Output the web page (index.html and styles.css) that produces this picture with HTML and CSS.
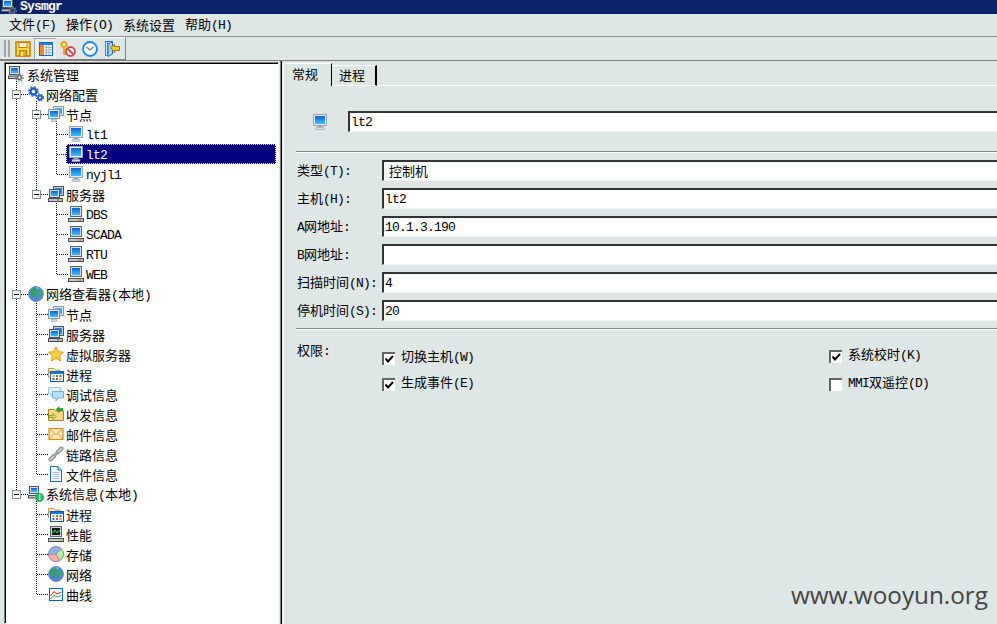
FILE: index.html
```html
<!DOCTYPE html>
<html lang="zh-CN">
<head>
<meta charset="utf-8">
<title>Sysmgr</title>
<link rel="stylesheet" href="styles.css">
</head>
<body>
<svg class="defs" width="0" height="0" aria-hidden="true">
  <defs>
    <linearGradient id="scr" x1="0" y1="0" x2="0" y2="1"><stop offset="0" stop-color="#0a62d8"/><stop offset="1" stop-color="#38c0ff"/></linearGradient>
    <symbol id="mon" viewBox="0 0 16 16">
      <rect x="1.5" y="0.5" width="13" height="11" fill="#e6ebf0" stroke="#98a2ac"/>
      <rect x="3" y="2" width="10" height="8" fill="url(#scr)"/>
      <rect x="5.5" y="12" width="5" height="1.5" fill="#9aa2aa"/>
      <rect x="4" y="13.5" width="8" height="2" fill="#d8dce0" stroke="#9aa2aa" stroke-width=".6"/>
    </symbol>
    <symbol id="srv" viewBox="0 0 16 16">
      <rect x="2.5" y="0.5" width="11" height="10" fill="#d8dde4" stroke="#5a6470"/>
      <rect x="4" y="2" width="8" height="7" fill="url(#scr)"/>
      <rect x="0.5" y="12.5" width="15" height="3" fill="#c4c8cc" stroke="#444c55"/>
      <rect x="8" y="13.5" width="2" height="1" fill="#f0b000"/>
      <rect x="11" y="13.5" width="2" height="1" fill="#e04020"/>
    </symbol>
    <symbol id="mons" viewBox="0 0 16 16">
      <rect x="5.5" y="0.5" width="10" height="9" fill="#dfe7f0" stroke="#8a96a4"/>
      <rect x="7" y="2" width="7" height="6" fill="#4aa8f0"/>
      <rect x="0.5" y="3.5" width="11" height="9" fill="#e6ebf0" stroke="#8a96a4"/>
      <rect x="2" y="5" width="8" height="6" fill="url(#scr)"/>
      <rect x="3.5" y="13.5" width="5" height="2" fill="#d8dce0" stroke="#9aa2aa" stroke-width=".6"/>
    </symbol>
    <symbol id="srvs" viewBox="0 0 16 16">
      <rect x="5.5" y="0.5" width="10" height="9" fill="#c8d2de" stroke="#4a5460"/>
      <rect x="7" y="2" width="7" height="6" fill="#2a88e0"/>
      <rect x="1.5" y="3.5" width="10" height="8" fill="#d8dde4" stroke="#4a5460"/>
      <rect x="3" y="5" width="7" height="5" fill="url(#scr)"/>
      <rect x="0.5" y="12.5" width="14" height="3" fill="#c4c8cc" stroke="#444c55"/>
      <rect x="9" y="13.5" width="2" height="1" fill="#e04020"/>
      <rect x="12" y="13.5" width="2" height="1" fill="#f0b000"/>
    </symbol>
    <symbol id="gears" viewBox="0 0 16 16">
      <circle cx="5.5" cy="5.5" r="3" fill="none" stroke="#1e5ec0" stroke-width="2.4"/>
      <circle cx="5.5" cy="5.5" r="4.6" fill="none" stroke="#2a70d8" stroke-width="1.6" stroke-dasharray="2 1.6"/>
      <circle cx="12" cy="11.5" r="2" fill="none" stroke="#1e5ec0" stroke-width="1.8"/>
      <circle cx="12" cy="11.5" r="3.4" fill="none" stroke="#2a70d8" stroke-width="1.4" stroke-dasharray="1.6 1.2"/>
    </symbol>
    <symbol id="globe" viewBox="0 0 16 16">
      <circle cx="8" cy="8" r="7.5" fill="#4a86de" stroke="#8090c8"/>
      <path d="M3 4 L7 2 L9 4 L7 7 L8 10 L6 12 L4 9 L2 7Z" fill="#2ea84a"/>
      <path d="M10 5 L14 5 L14 9 L11 12 L10 9Z" fill="#39b050"/>
      <path d="M8 1 L11 2 L9 3Z" fill="#a8d8f8"/>
    </symbol>
    <symbol id="star" viewBox="0 0 16 16">
      <polygon points="8,0.8 10.2,5.6 15.5,6.2 11.6,9.8 12.7,15 8,12.4 3.3,15 4.4,9.8 0.5,6.2 5.8,5.6" fill="#ffcf40" stroke="#e89a20"/>
    </symbol>
    <symbol id="proc" viewBox="0 0 16 16">
      <path d="M0.5 12V2.5H6L7.5 4H12V6H0.5" fill="#fbe8b0" stroke="#c89a40"/>
      <rect x="2.5" y="5.5" width="13" height="10" fill="#fff" stroke="#0858c0"/>
      <rect x="3" y="6" width="12" height="2" fill="#1878e0"/>
      <rect x="4.5" y="9" width="2" height="2" fill="#f09020"/>
      <rect x="8" y="9" width="2" height="2" fill="#40b040"/>
      <rect x="11.5" y="9" width="2" height="2" fill="#2070e0"/>
      <rect x="4.5" y="12" width="2" height="2" fill="#2070e0"/>
      <rect x="8" y="12" width="2" height="2" fill="#e04040"/>
      <rect x="11.5" y="12" width="2" height="2" fill="#f09020"/>
    </symbol>
    <symbol id="chat" viewBox="0 0 16 16">
      <path d="M0.5 1.5H12.5V8H5L3 10V8H0.5Z" fill="#e4f2fc" stroke="#9cc8e8"/>
      <path d="M4.5 5.5H15.5V12H10L8 15V12H4.5Z" fill="#b8e0f8" stroke="#70b0e0"/>
    </symbol>
    <symbol id="mailf" viewBox="0 0 16 16">
      <path d="M0.5 14.5V3.5H6L7.5 5H15.5V14.5Z" fill="#fbd880" stroke="#a88020"/>
      <path d="M8 3.5L11 0.5V2.5H15V4.5H11V6.5Z" fill="#20b030" stroke="#107020" stroke-width=".5"/>
      <path d="M1 9.5H5V7.5L8 10.5L5 13.5V11.5H1Z" fill="#f0e020" stroke="#107020" stroke-width=".5"/>
    </symbol>
    <symbol id="mail" viewBox="0 0 16 16">
      <rect x="1" y="2.5" width="14" height="11" fill="#fdeab0" stroke="#d08a18" stroke-width="1.2"/>
      <path d="M1.5 3L8 8.5L14.5 3M1.5 13L6 7.5M14.5 13L10 7.5" fill="none" stroke="#dca040"/>
    </symbol>
    <symbol id="link" viewBox="0 0 16 16">
      <path d="M2.5 13.5L6.5 9.5" stroke="#7e8488" stroke-width="4" stroke-linecap="round"/>
      <path d="M2.5 13.5L6.5 9.5" stroke="#cfd2d4" stroke-width="2" stroke-linecap="round"/>
      <path d="M9.5 6.5L13.5 2.5" stroke="#7e8488" stroke-width="4" stroke-linecap="round"/>
      <path d="M9.5 6.5L13.5 2.5" stroke="#cfd2d4" stroke-width="2" stroke-linecap="round"/>
      <path d="M6 10L10 6" stroke="#9ea2a6" stroke-width="2"/>
    </symbol>
    <symbol id="doc" viewBox="0 0 16 16">
      <path d="M2.5 0.5H10L13.5 4V15.5H2.5Z" fill="#fff" stroke="#1068d0"/>
      <path d="M10 0.5V4H13.5" fill="#cfe4fa" stroke="#1068d0"/>
      <path d="M4.5 6.5H11.5M4.5 8.5H11.5M4.5 10.5H11.5M4.5 12.5H11.5" stroke="#9cbce0"/>
    </symbol>
    <symbol id="sys" viewBox="0 0 16 16">
      <rect x="1.5" y="0.5" width="9" height="7" fill="#d8dde4" stroke="#4a5460"/>
      <rect x="3" y="2" width="6" height="4" fill="url(#scr)"/>
      <rect x="0.5" y="9.5" width="10" height="2.5" fill="#c4c8cc" stroke="#444c55"/>
      <circle cx="11.5" cy="11.5" r="4.5" fill="#28b868"/>
      <rect x="11" y="8.5" width="1.4" height="1.4" fill="#fff"/>
      <rect x="11" y="10.5" width="1.4" height="3.6" fill="#fff"/>
    </symbol>
    <symbol id="perf" viewBox="0 0 16 16">
      <rect x="2.5" y="0.5" width="11" height="10" fill="#d0d4d8" stroke="#5a6470"/>
      <rect x="4" y="2" width="8" height="7" fill="#101810"/>
      <path d="M4 6H6L7 4L9 7L10 5H12" fill="none" stroke="#20e040"/>
      <rect x="0.5" y="12.5" width="15" height="3" fill="#c4c8cc" stroke="#444c55"/>
      <rect x="10" y="13.5" width="3" height="1" fill="#f0b000"/>
    </symbol>
    <symbol id="pie" viewBox="0 0 16 16">
      <circle cx="8" cy="8" r="7.5" fill="#8cb0f0" stroke="#7a84b8"/>
      <path d="M8 8L13.5 3A7.5 7.5 0 0 1 11.5 14.6Z" fill="#b8f0a0" stroke="#70a070" stroke-width=".6"/>
      <path d="M8 8L11.5 14.6A7.5 7.5 0 0 1 0.6 9Z" fill="#f8b0a8" stroke="#c07070" stroke-width=".6"/>
    </symbol>
    <symbol id="chart" viewBox="0 0 16 16">
      <rect x="1.5" y="2.5" width="13" height="12" fill="#fff" stroke="#0860d8"/>
      <path d="M2.5 10L6 5.5L9 8L13.5 6" fill="none" stroke="#e82020"/>
      <path d="M2.5 13L6 9L9 11L13.5 9.5" fill="none" stroke="#28b030"/>
    </symbol>
    <symbol id="mgr" viewBox="0 0 16 16">
      <rect x="1.5" y="0.5" width="10" height="8" fill="#d8dde4" stroke="#4a5460"/>
      <rect x="3" y="2" width="7" height="5" fill="url(#scr)"/>
      <rect x="0.5" y="10" width="9" height="2.5" fill="#c4c8cc" stroke="#444c55"/>
      <circle cx="11.5" cy="11.5" r="2" fill="none" stroke="#60686e" stroke-width="1.6"/>
      <circle cx="11.5" cy="11.5" r="3.7" fill="none" stroke="#80888e" stroke-width="1.4" stroke-dasharray="1.6 1.2"/>
    </symbol>
    <symbol id="save" viewBox="0 0 16 16">
      <rect x="1" y="1" width="14" height="14" fill="#ffdc50" stroke="#d08000" stroke-width="1.6"/>
      <rect x="4" y="1.5" width="8" height="5" fill="#fff8d0" stroke="#d08000"/>
      <rect x="4.5" y="9.5" width="7" height="5.5" fill="#f0a818" stroke="#d08000"/>
      <rect x="6" y="11" width="2" height="4" fill="#fff0b0"/>
    </symbol>
    <symbol id="table" viewBox="0 0 16 16">
      <rect x="1.5" y="1.5" width="13" height="13" fill="#fff" stroke="#0868d8"/>
      <rect x="2" y="2" width="12" height="2" fill="#1888f0"/>
      <rect x="2" y="4" width="4" height="10" fill="#f08820"/>
      <path d="M7 6.5H14M7 9H14M7 11.5H14M8.5 4V14M11 4V14" stroke="#a8b0b8"/>
    </symbol>
    <symbol id="keyno" viewBox="0 0 16 16">
      <circle cx="4" cy="3.5" r="2.5" fill="none" stroke="#e8b000" stroke-width="2"/>
      <path d="M4 6V14M4 10H7M4 13H6.5" stroke="#e8b000" stroke-width="2"/>
      <circle cx="10.5" cy="10.5" r="4.5" fill="#dff" stroke="#d84848" stroke-width="1.8"/>
      <path d="M7.5 7.5L13.5 13.5" stroke="#d84848" stroke-width="1.8"/>
    </symbol>
    <symbol id="clock" viewBox="0 0 16 16">
      <circle cx="8" cy="8" r="7" fill="#f4f4f4" stroke="#1888e8" stroke-width="1.8"/>
      <path d="M4.5 6L8 9L11.5 6" fill="none" stroke="#808890" stroke-width="1.4"/>
    </symbol>
    <symbol id="door" viewBox="0 0 16 16">
      <path d="M1.5 0.5H8.5V13L4 15.5V3L8.5 1" fill="#a8d4f8" stroke="#1870d0"/>
      <rect x="1.5" y="0.5" width="2" height="14" fill="#d8ecfc" stroke="#1870d0" stroke-width=".8"/>
      <path d="M6.5 5.5L10.5 2.5V4.5H15.5V8.5H10.5V10.5Z" transform="translate(0,1)" fill="#ffc830" stroke="#a87000"/>
    </symbol>
    <symbol id="check" viewBox="0 0 9 9">
      <path d="M0.5 3.5L3 6.5L8 1" fill="none" stroke="#000" stroke-width="2"/>
    </symbol>
  </defs>
</svg>

<div class="app">
  <header class="titlebar">
    <svg class="title-icon"><use href="#mgr"/></svg>
    <span class="title-text">Sysmgr</span>
  </header>

  <nav class="menubar">
    <span class="menu-item">文件<span class="m">(F)</span></span>
    <span class="menu-item">操作<span class="m">(O)</span></span>
    <span class="menu-item">系统设置</span>
    <span class="menu-item">帮助<span class="m">(H)</span></span>
  </nav>

  <div class="toolbar-band">
    <div class="toolbar">
      <span class="grip"></span>
      <span class="tool tool-save"><svg class="tool-icon"><use href="#save"/></svg></span>
      <span class="tool tool-on"><svg class="tool-icon"><use href="#table"/></svg></span>
      <span class="tool"><svg class="tool-icon"><use href="#keyno"/></svg></span>
      <span class="tool"><svg class="tool-icon"><use href="#clock"/></svg></span>
      <span class="tool"><svg class="tool-icon"><use href="#door"/></svg></span>
    </div>
  </div>

  <main class="main">
    <aside class="tree-frame">
      <div class="tree">
        <svg class="tree-lines" viewBox="6 65 271 559" aria-hidden="true">
          <g class="dots">
            <path d="M16.5 82V495.5M16.5 95.5H28M16.5 295.5H28M16.5 495.5H28"/>
            <path d="M36.5 102V195.5M36.5 115.5H48M36.5 195.5H48"/>
            <path d="M56.5 122V175.5M56.5 135.5H68M56.5 155.5H66M56.5 175.5H68"/>
            <path d="M56.5 202V275.5M56.5 215.5H68M56.5 235.5H68M56.5 255.5H68M56.5 275.5H68"/>
            <path d="M36.5 302V475.5M36.5 315.5H48M36.5 335.5H48M36.5 355.5H48M36.5 375.5H48M36.5 395.5H48M36.5 415.5H48M36.5 435.5H48M36.5 455.5H48M36.5 475.5H48"/>
            <path d="M36.5 502V595.5M36.5 515.5H48M36.5 535.5H48M36.5 555.5H48M36.5 575.5H48M36.5 595.5H48"/>
          </g>
          <g class="boxes">
            <path d="M12.5 91.5h8v8h-8zM32.5 111.5h8v8h-8zM32.5 191.5h8v8h-8zM12.5 291.5h8v8h-8zM12.5 491.5h8v8h-8z"/>
          </g>
          <g class="minus">
            <path d="M14 95.5h5M34 115.5h5M34 195.5h5M14 295.5h5M14 495.5h5"/>
          </g>
        </svg>
        <ul class="tree-list">
          <li class="row l0"><svg class="ico"><use href="#mgr"/></svg><span class="lbl">系统管理</span></li>
          <li class="row l1"><svg class="ico"><use href="#gears"/></svg><span class="lbl">网络配置</span></li>
          <li class="row l2"><svg class="ico"><use href="#mons"/></svg><span class="lbl">节点</span></li>
          <li class="row l3"><svg class="ico"><use href="#mon"/></svg><span class="lbl m">lt1</span></li>
          <li class="row l3 sel"><svg class="ico"><use href="#mon"/></svg><span class="lbl m">lt2</span></li>
          <li class="row l3"><svg class="ico"><use href="#mon"/></svg><span class="lbl m">nyjl1</span></li>
          <li class="row l2"><svg class="ico"><use href="#srvs"/></svg><span class="lbl">服务器</span></li>
          <li class="row l3"><svg class="ico"><use href="#srv"/></svg><span class="lbl m">DBS</span></li>
          <li class="row l3"><svg class="ico"><use href="#srv"/></svg><span class="lbl m">SCADA</span></li>
          <li class="row l3"><svg class="ico"><use href="#srv"/></svg><span class="lbl m">RTU</span></li>
          <li class="row l3"><svg class="ico"><use href="#srv"/></svg><span class="lbl m">WEB</span></li>
          <li class="row l1"><svg class="ico"><use href="#globe"/></svg><span class="lbl">网络查看器<span class="m">(</span>本地<span class="m">)</span></span></li>
          <li class="row l2"><svg class="ico"><use href="#mons"/></svg><span class="lbl">节点</span></li>
          <li class="row l2"><svg class="ico"><use href="#srvs"/></svg><span class="lbl">服务器</span></li>
          <li class="row l2"><svg class="ico"><use href="#star"/></svg><span class="lbl">虚拟服务器</span></li>
          <li class="row l2"><svg class="ico"><use href="#proc"/></svg><span class="lbl">进程</span></li>
          <li class="row l2"><svg class="ico"><use href="#chat"/></svg><span class="lbl">调试信息</span></li>
          <li class="row l2"><svg class="ico"><use href="#mailf"/></svg><span class="lbl">收发信息</span></li>
          <li class="row l2"><svg class="ico"><use href="#mail"/></svg><span class="lbl">邮件信息</span></li>
          <li class="row l2"><svg class="ico"><use href="#link"/></svg><span class="lbl">链路信息</span></li>
          <li class="row l2"><svg class="ico"><use href="#doc"/></svg><span class="lbl">文件信息</span></li>
          <li class="row l1"><svg class="ico"><use href="#sys"/></svg><span class="lbl">系统信息<span class="m">(</span>本地<span class="m">)</span></span></li>
          <li class="row l2"><svg class="ico"><use href="#proc"/></svg><span class="lbl">进程</span></li>
          <li class="row l2"><svg class="ico"><use href="#perf"/></svg><span class="lbl">性能</span></li>
          <li class="row l2"><svg class="ico"><use href="#pie"/></svg><span class="lbl">存储</span></li>
          <li class="row l2"><svg class="ico"><use href="#globe"/></svg><span class="lbl">网络</span></li>
          <li class="row l2"><svg class="ico"><use href="#chart"/></svg><span class="lbl">曲线</span></li>
        </ul>
      </div>
    </aside>

    <section class="pane">
      <div class="tabs">
        <div class="tab tab-active">常规</div>
        <div class="tab tab-idle">进程</div>
        <div class="tab-rest"></div>
      </div>
      <div class="page">
        <div class="name-row">
          <svg class="name-icon"><use href="#mon"/></svg>
          <div class="field m">lt2</div>
        </div>
        <div class="rule rule-top"></div>
        <div class="form">
          <label class="form-row"><span class="form-label">类型<span class="m">(T):</span></span><span class="field field-combo">控制机</span></label>
          <label class="form-row"><span class="form-label">主机<span class="m">(H):</span></span><span class="field m">lt2</span></label>
          <label class="form-row"><span class="form-label"><span class="m">A</span>网地址<span class="m">:</span></span><span class="field m">10.1.3.190</span></label>
          <label class="form-row"><span class="form-label"><span class="m">B</span>网地址<span class="m">:</span></span><span class="field m"></span></label>
          <label class="form-row"><span class="form-label">扫描时间<span class="m">(N):</span></span><span class="field m">4</span></label>
          <label class="form-row"><span class="form-label">停机时间<span class="m">(S):</span></span><span class="field m">20</span></label>
        </div>
        <div class="rule rule-bottom"></div>
        <div class="perm">
          <div class="perm-label">权限<span class="m">:</span></div>
          <div class="perm-col perm-left">
            <div class="check-row"><span class="box"><svg class="tick"><use href="#check"/></svg></span><span class="check-text">切换主机<span class="m">(W)</span></span></div>
            <div class="check-row"><span class="box"><svg class="tick"><use href="#check"/></svg></span><span class="check-text">生成事件<span class="m">(E)</span></span></div>
          </div>
          <div class="perm-col perm-right">
            <div class="check-row"><span class="box"><svg class="tick"><use href="#check"/></svg></span><span class="check-text">系统校时<span class="m">(K)</span></span></div>
            <div class="check-row"><span class="box"></span><span class="check-text"><span class="m">MMI</span>双遥控<span class="m">(D)</span></span></div>
          </div>
        </div>
      </div>
    </section>
  </main>
  <div class="watermark">www.wooyun.org</div>
</div>
</body>
</html>
```

FILE: styles.css
```css
* { box-sizing: border-box; }
html, body { margin: 0; padding: 0; }
body {
  width: 997px;
  height: 624px;
  overflow: hidden;
  background: #dee6e6;
  color: #000;
  font-family: "Noto Sans CJK SC", "Liberation Sans", sans-serif;
  font-size: 13px;
  line-height: 16px;
}
.defs { position: absolute; }
.m { font-family: "Liberation Mono", "Noto Sans CJK SC", monospace; font-size: 13px; letter-spacing: -0.8px; }

.app { position: relative; width: 997px; height: 624px; display: flex; flex-direction: column; overflow: hidden; }

.titlebar { height: 14px; flex: none; background: #0a246a; display: flex; align-items: center; overflow: hidden; color: #fff; padding-left: 1px; }
.title-icon { width: 16px; height: 16px; flex: none; margin-right: 3px; }
.title-text { font: bold 13px/14px "Liberation Mono", monospace; letter-spacing: -0.8px; }

.menubar { height: 23px; flex: none; display: flex; align-items: center; gap: 10px; padding-left: 9px; border-bottom: 1px solid #8a9090; }

.toolbar-band { height: 23px; flex: none; }
.toolbar { width: 126px; height: 23px; display: flex; align-items: center; padding-left: 4px; border-top: 1px solid #fff; border-right: 1px solid #808080; border-bottom: 1px solid #808080; }
.grip { width: 6px; height: 17px; border-left: 2px solid #a0a6a6; border-right: 2px solid #a0a6a6; margin-right: 5px; }
.tool { width: 22px; height: 21px; display: flex; align-items: center; justify-content: center; flex: none; }
.tool-save { width: 15px; margin-right: 4px; }
.tool-on { background: conic-gradient(#fff 25%, #dee6e6 0 50%, #fff 0 75%, #dee6e6 0) 0 0 / 2px 2px; margin-right: 1px; border-top: 1px solid #a0a6a6; border-left: 1px solid #a0a6a6; }
.tool-icon { width: 16px; height: 16px; display: block; flex: none; }

.main { flex: 1; min-height: 0; display: flex; border-top: 1px solid #808080; }

.tree-frame { width: 275px; margin: 1px 0 0 4px; flex: none; border: 1px solid; border-color: #808080 #fff #fff #808080; }
.tree { position: relative; height: 100%; background: #fff; border-left: 1px solid #000; border-top: 1px solid #000; overflow: hidden; }
.tree-lines { position: absolute; left: 0; top: 0; width: 271px; height: 559px; }
.dots path { fill: none; stroke: #000; stroke-dasharray: 1 1; shape-rendering: crispEdges; }
.boxes path { fill: #fff; stroke: #8a9096; shape-rendering: crispEdges; }
.minus path { fill: none; stroke: #000; shape-rendering: crispEdges; }

.tree-list { position: relative; list-style: none; margin: 0; padding: 0 2px 0 0; }
.row { height: 20px; display: flex; align-items: center; }
.ico { width: 16px; height: 16px; flex: none; }
.lbl { margin-left: 3px; padding-top: 1px; white-space: nowrap; }
.lbl.m { padding-top: 4px; }
.l0 { padding-left: 2px; }
.l1 { padding-left: 22px; }
.l1 .lbl { margin-left: 2px; }
.l2 { padding-left: 42px; }
.l2 .lbl { margin-left: 2px; }
.l3 { margin-left: 60px; padding-left: 2px; }
.l3 .lbl { margin-left: 2px; }
.sel { background: #000080; color: #fff; outline: 1px dotted #fff4b0; outline-offset: -1px; }

.pane { flex: 1; min-width: 0; margin-left: 1px; border-left: 1px solid #808080; display: flex; flex-direction: column; }
.tabs { flex: none; height: 25px; padding-left: 1px; border-left: 1px solid #000; padding-top: 2px; display: flex; }
.tab { display: flex; align-items: flex-start; }
.tab-active { width: 49px; height: 23px; background: #dee6e6; padding: 2px 0 0 8px; border-top: 1px solid #fff; border-left: 1px solid #fff; border-right: 1px solid #000; border-radius: 2px 0 0 0; }
.tab-idle { width: 45px; height: 21px; margin-top: 2px; padding: 1px 0 0 7px; border-top: 1px solid #fff; border-right: 2px solid #000; border-bottom: 1px solid #fff; }
.tab-rest { flex: 1; height: 23px; border-bottom: 1px solid #fff; }

.page { flex: 1; min-height: 0; border-left: 1px solid #000; padding-left: 1px; position: relative; }
.page::before { content: ""; position: absolute; left: 1px; top: 0; bottom: 0; width: 1px; background: #fff; }
.name-row { display: flex; align-items: center; gap: 20px; margin: 25px 0 0 29px; }
.name-icon { width: 16px; height: 16px; flex: none; }
.field { display: block; flex: 1; height: 21px; background: #fff; border-top: 2px solid #303434; border-left: 2px solid #303434; border-bottom: 1px solid #f2f5f5; padding-left: 1px; line-height: 20px; white-space: nowrap; }
.field-combo { padding-left: 5px; font-size: 13px; line-height: 17px; }

.rule { height: 2px; margin-left: 13px; background: #808888; border-bottom: 1px solid #fff; }
.rule-top { margin-top: 19px; }
.rule-bottom { margin-top: 7px; }

.form { margin: 7px 0 0 13px; display: flex; flex-direction: column; gap: 7px; }
.form-row { display: flex; align-items: center; height: 21px; }
.form-label { width: 86px; flex: none; padding-left: 1px; white-space: nowrap; }

.perm { display: flex; align-items: flex-start; margin-left: 13px; }
.perm-label { width: 86px; flex: none; padding-left: 1px; margin-top: 12px; }
.perm-col { display: flex; flex-direction: column; }
.perm-left { width: 447px; flex: none; margin-top: 21px; gap: 12px; }
.perm-right { margin-top: 19px; gap: 14px; }
.check-row { display: flex; align-items: center; gap: 6px; height: 14px; white-space: nowrap; }
.check-text { margin-top: -2px; }
.box { width: 13px; height: 13px; flex: none; background: #fff; border-top: 2px solid #606666; border-left: 2px solid #606666; display: flex; align-items: center; justify-content: center; }
.tick { width: 9px; height: 9px; display: block; }

.watermark { position: absolute; right: 9px; top: 578px; font-family: "Open Sans", sans-serif; font-size: 24.3px; line-height: 34px; color: #444; }
```
